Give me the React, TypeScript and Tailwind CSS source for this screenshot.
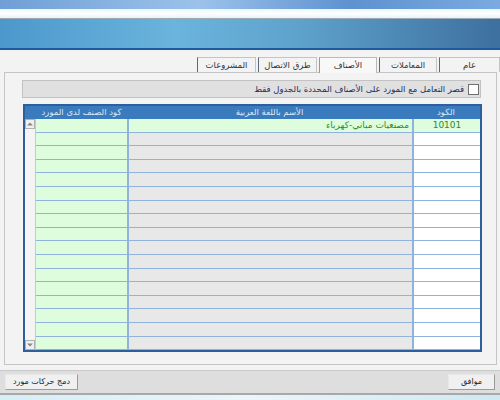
import React from 'react';

const FONT = { fontFamily: '"DejaVu Sans", "Noto Sans", sans-serif' };

const tabs = [
  { label: 'عام', w: 'w-[61px]' },
  { label: 'المعاملات', w: 'w-[58px]' },
  { label: 'الأصناف', w: 'w-[58px]', active: true },
  { label: 'طرق الاتصال', w: 'w-[59px]' },
  { label: 'المشروعات', w: 'w-[59px]' },
];

const rows = Array.from({ length: 17 }, (_, i) =>
  i === 0 ? { code: '10101', name: 'مصنعيات مباني-كهرباء', supplier: '' } : { code: '', name: '', supplier: '' }
);

function Header() {
  return (
    <div className="w-[500px]">
      <div className="h-[9px] bg-[linear-gradient(90deg,#6f9fd6,#9cc2ea_40%,#5e92d0_70%,#7aaae0)]" />
      <div className="h-[9px] bg-[linear-gradient(180deg,#e8f6fb,#ffffff_50%,#e6f3f8)]" />
      <div className="h-px bg-[#a0a8b0]" />
      <div className="h-[29px] bg-[linear-gradient(90deg,#4c98cc,#6ab4dd_35%,#5ea2cc_60%,#3d6f9f)]" />
      <div className="h-[2px] bg-[#1f5b9c]" />
    </div>
  );
}

function Tabs() {
  return (
    <div dir="rtl" className="flex gap-[2px] h-[19px] items-end">
      {tabs.map((t) => (
        <div
          key={t.label}
          className={
            t.active
              ? `${t.w} h-[16px] bg-[#f8f8f8] border border-b-0 border-[#b8b8b8] border-l-[#8a9aaa] text-[8.5px] text-[#333] flex justify-center pt-px relative -mb-px`
              : `${t.w} h-[15px] bg-[#f3f3f3] border border-b-0 border-[#c4c4c4] border-l-[#5a6a7a] text-[8.5px] text-[#333] flex justify-center pt-px`
          }
        >
          {t.label}
        </div>
      ))}
    </div>
  );
}

function Grid() {
  return (
    <div className="ml-[18px] mr-[14px] mt-[6px] border-2 border-[#2d5f9e] bg-[#3a7bbd]" dir="rtl">
      <div className="flex h-[13px] text-[8.5px] text-[#dce8f4] leading-[13px]">
        <div className="w-[68px] text-center">الكود</div>
        <div className="w-[285px] text-center">الأسم باللغة العربية</div>
        <div className="w-[91px] text-center">كود الصنف لدى المورد</div>
        <div className="flex-1" />
      </div>
      <div className="flex">
        <div className="flex-1 flex flex-col">
          {rows.map((r, i) => (
            <div key={i} className="flex h-[13.6px] border-b border-[#8fb3dc] text-[9px] leading-[12px]">
              <div
                className={`w-[68px] border-l-2 border-[#8fb3dc] text-center text-[#2f8a2f] ${i === 0 ? 'bg-[#ddfddd]' : 'bg-white'}`}
              >
                {r.code}
              </div>
              <div
                className={`w-[285px] border-l-2 border-[#8fb3dc] pr-[3px] text-[#2f8a2f] ${i === 0 ? 'bg-[#ddfddd]' : 'bg-[#e8e8e8]'}`}
              >
                {r.name}
              </div>
              <div className="w-[91px] bg-[#ddfddd]" />
            </div>
          ))}
        </div>
        <div className="w-[11px] bg-[#f4f4f4] flex flex-col justify-between border-r border-[#c8c8c8]">
          <div className="h-[10px] bg-[#f0f0f0] border border-[#b0b0b0] flex items-center justify-center">
            <svg width="6" height="4" viewBox="0 0 6 4"><path d="M0 3.5L3 0.5L6 3.5Z" fill="#888" /></svg>
          </div>
          <div className="h-[10px] bg-[#f0f0f0] border border-[#b0b0b0] flex items-center justify-center">
            <svg width="6" height="4" viewBox="0 0 6 4"><path d="M0 0.5L3 3.5L6 0.5Z" fill="#888" /></svg>
          </div>
        </div>
      </div>
    </div>
  );
}

export default function App() {
  return (
    <div className="w-[500px] h-[400px] bg-[#f3f3f3] overflow-hidden flex flex-col" style={FONT}>
      <Header />
      <div className="flex justify-end pt-[3px]">
        <Tabs />
      </div>
      <div className="ml-[4px] mr-[3px] h-[293px] border border-[#c4c4c4] bg-[#f3f3f3]">
        <div dir="rtl" className="ml-[17px] mr-[15px] mt-[7px] h-[18px] bg-[#e0e0e0] border border-[#c2c2c2] flex items-center gap-[4px] pr-[1px]">
          <div className="w-[11px] h-[11px] bg-white border border-[#707070]" />
          <span className="text-[8.5px] text-[#1c2f5a]">قصر التعامل مع المورد على الأصناف المحددة بالجدول فقط</span>
        </div>
        <Grid />
      </div>
      <div className="mt-[5px] h-px bg-[#c8c8c8]" />
      <div className="h-[22px] bg-[#dedede] flex justify-between items-center px-[5px]">
        <div className="w-[73px] h-[16px] bg-[#f0f0f0] border border-[#9a9a9a] border-t-[#e8e8e8] border-l-[#e8e8e8] text-[8px] text-[#222] flex items-center justify-center">
          دمج حركات مورد
        </div>
        <div className="w-[47px] h-[16px] bg-[#f0f0f0] border border-[#9a9a9a] border-t-[#e8e8e8] border-l-[#e8e8e8] text-[8px] text-[#222] flex items-center justify-center">
          موافق
        </div>
      </div>
      <div className="h-[2px] bg-[#a8a8a8]" />
      <div className="flex-1 bg-[linear-gradient(90deg,#d6eef6,#eaf6fa,#d0e8f2)]" />
    </div>
  );
}
